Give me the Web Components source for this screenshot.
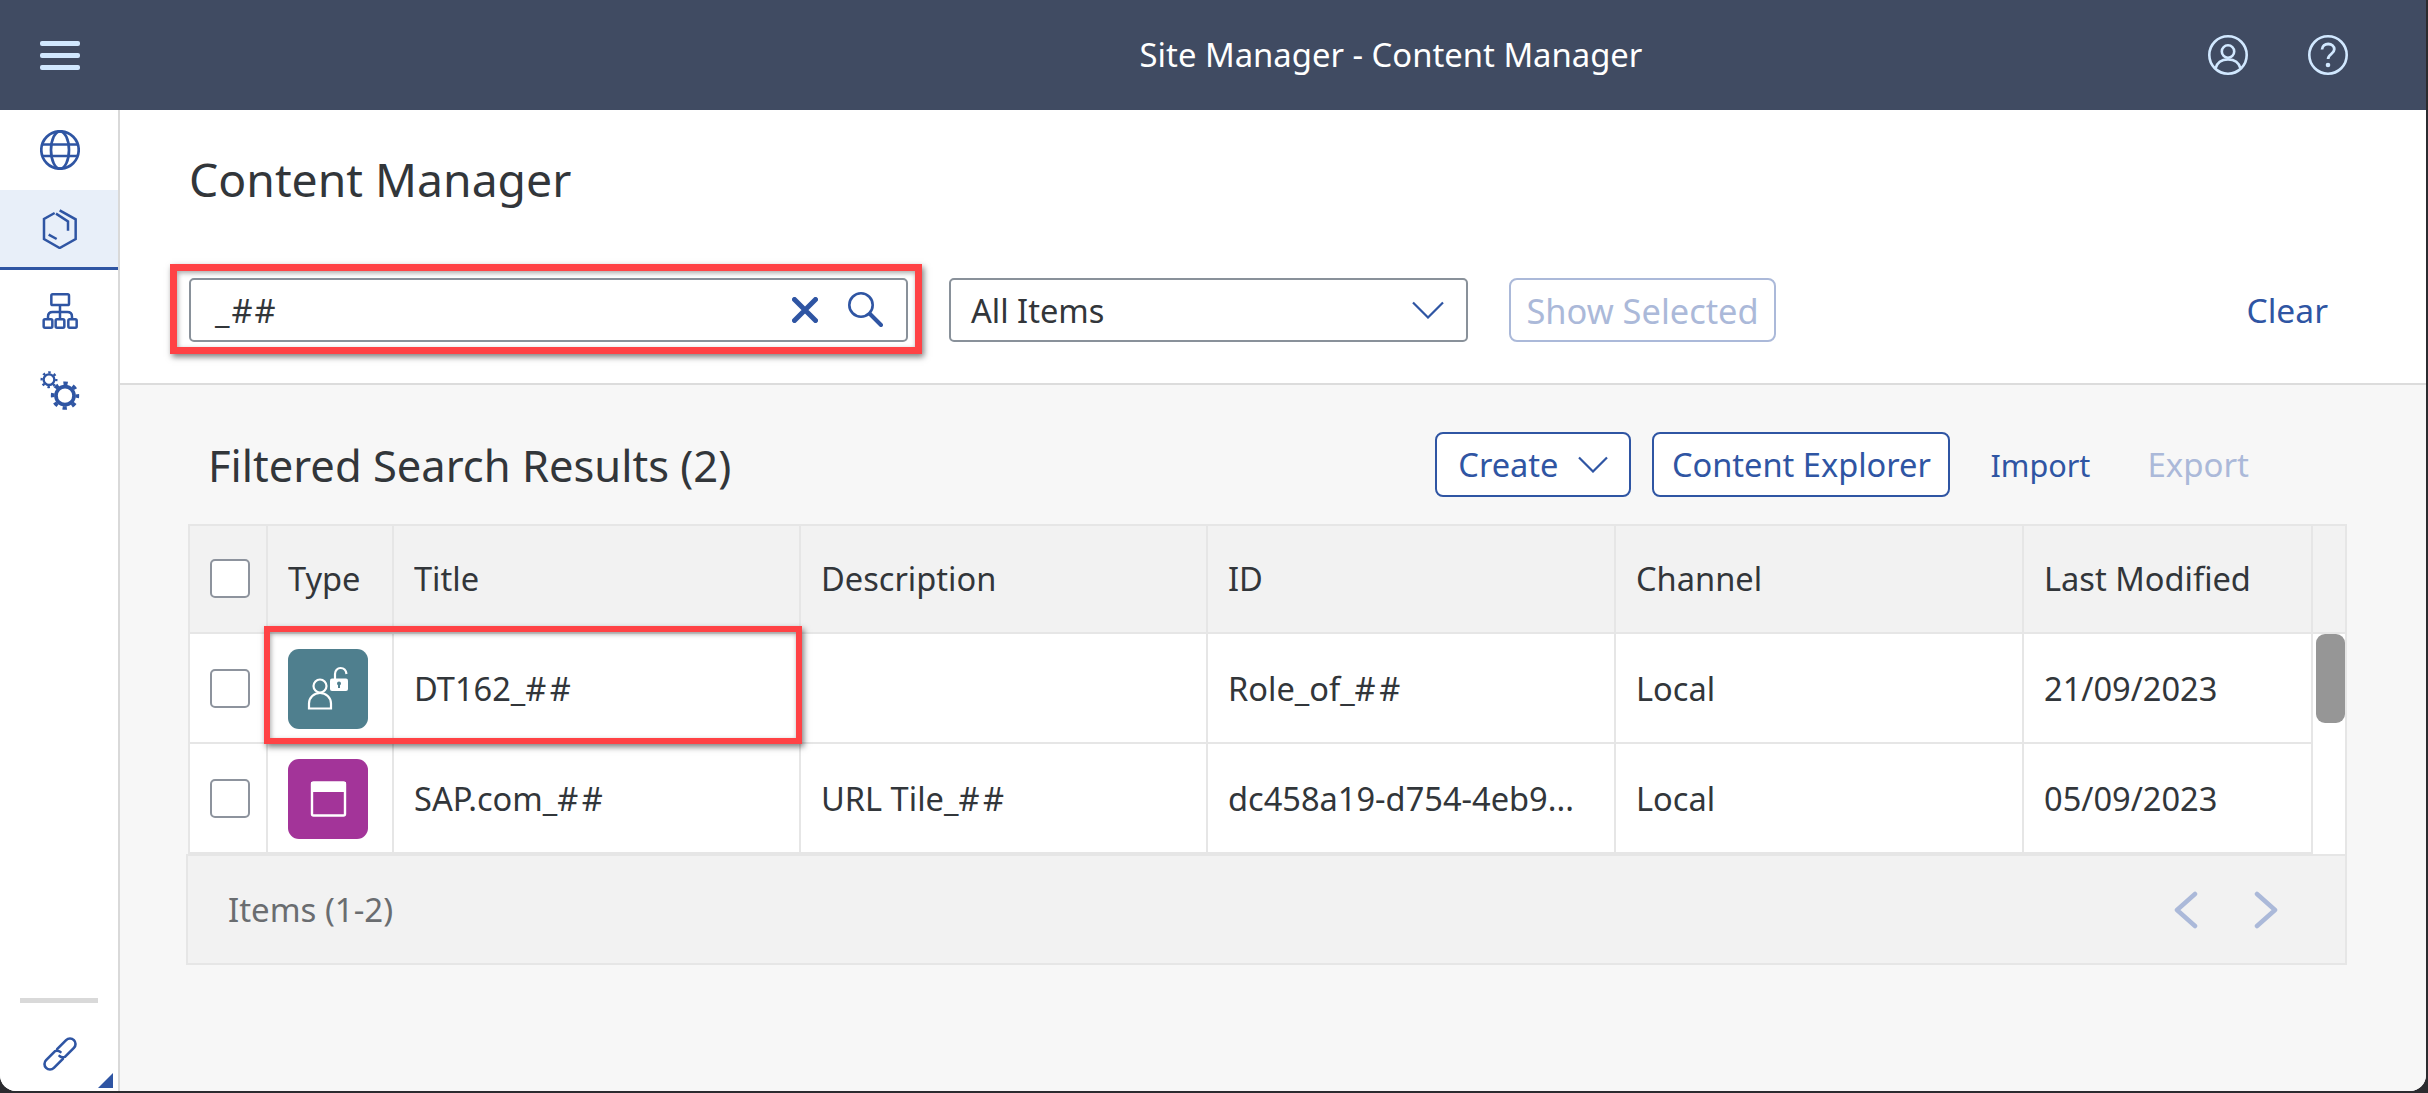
<!DOCTYPE html>
<html lang="en"><head><meta charset="utf-8"><title>Content Manager</title>
<style>
html,body{margin:0;height:100%;background:#2b2b2f;overflow:hidden}
body{font-family:"Noto Sans","Open Sans","Liberation Sans",sans-serif;color:#32363a}
</style></head><body>
<app-shell>
  <shell-bar title-text="Site Manager - Content Manager"></shell-bar>
  <div style="display:flex;flex:1;min-height:0">
    <side-nav></side-nav>
    <div style="flex:1;display:flex;flex-direction:column;min-width:0">
      <page-head></page-head>
      <results-panel></results-panel>
    </div>
  </div>
</app-shell>
<script>
const BLUE='#2f55a3',DIS='#abb9d9',PALE='#d1e8ff';
const HS='<span style="letter-spacing:3.5px">##</span>';
function def(name,html,init){
  customElements.define(name,class extends HTMLElement{
    connectedCallback(){
      if(this.shadowRoot)return;
      const r=this.attachShadow({mode:'open'});
      r.innerHTML=typeof html==='function'?html(this):html;
      if(init)init(this,r);
    }
  });
}
def('app-shell',`<style>:host{display:flex;flex-direction:column;width:2426px;height:1091px;background:#f7f7f7;border-radius:0 0 16px 16px;overflow:hidden}</style><slot></slot>`);

def('shell-bar',h=>`<style>
:host{display:flex;align-items:center;height:110px;flex:none;background:#404b62;color:#fff;position:relative;box-sizing:border-box}
.t{flex:1;text-align:center;font-size:32.8px;padding:0 0 2px 494px;color:#fff}
svg{display:block;flex:none}
.m{margin-left:40px}
.u{margin-right:60px}.h{margin-right:78px}
</style>
<svg class="m" width="40" height="30" viewBox="0 0 40 30"><g fill="${PALE}"><rect y="1" width="40" height="5" rx="2"/><rect y="13" width="40" height="5" rx="2"/><rect y="25" width="40" height="5" rx="2"/></g></svg>
<div class="t">${h.getAttribute('title-text')}</div>
<svg class="u" width="40" height="42" viewBox="0 0 40 42" fill="none" stroke="${PALE}" stroke-width="2.6"><circle cx="20" cy="21" r="18.7"/><circle cx="20" cy="17.5" r="6.2"/><path d="M7.5 34.500c1.500-6 6-9 12.500-9s11 3 12.500 9"/></svg>
<svg class="h" width="40" height="42" viewBox="0 0 40 42" fill="none" stroke="${PALE}" stroke-width="2.6"><circle cx="20" cy="21" r="18.700"/><path d="M14 15.500c.3-3.500 3-5.500 6.200-5.500 3.500 0 6.100 2.200 6.100 5.300 0 4.700-6.200 4.700-6.200 9.700" stroke-width="2.800"/><circle cx="20" cy="31" r="2.300" fill="${PALE}" stroke="none"/></svg>`);

def('nav-item',h=>`<style>
:host{display:flex;align-items:center;justify-content:center;width:118px;box-sizing:border-box;height:var(--h,80px);padding-left:2px}
:host([active]){background:#e8eff9;border-bottom:3px solid ${BLUE};}
</style><slot></slot>`);

def('side-nav',`<style>
:host{display:flex;flex-direction:column;width:120px;flex:none;background:#fff;border-right:2px solid #d9d9d9;box-sizing:border-box;position:relative}
svg{display:block;fill:none;stroke:${BLUE}}
.sp{flex:1}
.dv{height:5px;width:78px;background:#d9d9d9;margin:0 0 0 20px}
.tri{position:absolute;left:98px;top:963px;width:15px;height:15px;background:${BLUE};clip-path:polygon(100% 0,100% 100%,0 100%)}
</style>
<nav-item><svg width="40" height="40" viewBox="0 0 40 40" stroke-width="2.700"><circle cx="20" cy="20" r="18.700"/><ellipse cx="20" cy="20" rx="9" ry="18.700"/><path d="M2.500 14.500h35M2.500 26h35"/></svg></nav-item>
<nav-item active><svg width="40" height="40" viewBox="60 269 120 120" stroke-width="7.500"><path d="M104 281 72 299v60l47 27 48-27v-59l-48-27"/><path d="M108 283l36 23v28M86 346l24 13"/></svg></nav-item>
<nav-item><svg style="margin-top:4px" width="40" height="40" viewBox="60 20 120 120" stroke-width="7.500"><rect x="94" y="27" width="53" height="32" rx="4"/><path d="M120 59v43M84 102v-8q0-14 14-14h44q14 0 14 14v8"/><rect x="71" y="102" width="26" height="25" rx="4"/><rect x="107" y="102" width="26" height="25" rx="4"/><rect x="145" y="102" width="25" height="25" rx="4"/></svg></nav-item>
<nav-item><svg width="40" height="40" viewBox="60 255 120 120"><circle cx="135" cy="332" r="27" stroke-width="11"/><circle cx="135" cy="332" r="37" stroke-width="11" stroke-dasharray="13 16.060" stroke-dashoffset="6"/><circle cx="87" cy="284" r="16" stroke-width="7"/><circle cx="87" cy="284" r="22" stroke-width="7" stroke-dasharray="7.500 9.780" stroke-dashoffset="3"/></svg></nav-item>
<div class="sp"></div>
<div class="dv"></div>
<nav-item style="--h:88px"><svg style="margin-top:14px" width="36" height="36" viewBox="0 0 36 36" stroke-width="2.600" stroke-linecap="round"><path d="M15.100 13.100 24.100 4.100A5.500 5.500 0 0 1 31.900 11.900L22.900 20.900A5.500 5.500 0 0 1 17.500 20"/><path d="M20.900 22.900 11.900 31.900A5.500 5.500 0 0 1 4.100 24.100L13.100 15.100A5.500 5.500 0 0 1 18.500 16"/></svg></nav-item>
<div class="tri"></div>`);

def('red-mark',`<style>:host{position:absolute;display:block;box-sizing:border-box;border:7px solid #ff4245;box-shadow:2px 3px 6px rgba(0,0,0,.5),inset 1px 2px 5px rgba(0,0,0,.35);pointer-events:none;z-index:5}</style>`);

def('field-box',`<style>:host{display:flex;align-items:center;box-sizing:border-box;height:64px;border:2px solid #89919a;border-radius:5px;background:#fff;font-size:32.600px;color:#32363a;position:relative}</style><slot></slot>`);

def('ui-button',h=>{const d=h.hasAttribute('disabled');return `<style>
:host{display:inline-flex;align-items:center;justify-content:center;box-sizing:border-box;height:${h.getAttribute('h')||65}px;border:2px solid ${d?DIS:BLUE};border-radius:8px;background:#fff;color:${d?DIS:BLUE};font-size:${h.getAttribute('fs')||32.6}px;white-space:nowrap}
:host([flat]){border:none;background:none;height:auto}
</style><slot></slot>`});

def('page-head',`<style>
:host{display:block;background:#fff;height:275px;flex:none;box-sizing:border-box;border-bottom:2px solid #dcdcdc;padding:0 98px 0 69px}
h1{margin:0;font-weight:400;font-size:46.300px;line-height:66px;padding-top:37px;height:168px;box-sizing:border-box;color:#32363a}
.row{display:flex;align-items:center}
.s{width:719px;position:relative}
.val{flex:1;padding-left:24px;letter-spacing:2px}
svg{display:block;flex:none}
.sel{width:519px;margin-left:41px}
.show{width:267px;margin-left:41px}
.clear{margin-left:auto}
red-mark{left:-19px;top:-14px;width:752px;height:90px}
</style>
<h1>Content Manager</h1>
<div class="row">
  <div class="s"><field-box>
    <span class="val">_##</span>
    <svg width="26" height="26" viewBox="0 0 26 26" fill="none" stroke="${BLUE}" stroke-width="5" stroke-linecap="round" style="margin-right:29px"><path d="M2.500 2.500l21 21M23.500 2.500l-21 21"/></svg>
    <svg width="36" height="36" viewBox="0 0 36 36" fill="none" stroke="${BLUE}" stroke-linecap="round" style="margin-right:23px"><circle cx="14" cy="13" r="11.700" stroke-width="2.600"/><path d="M23 22l11 11" stroke-width="4"/></svg>
  </field-box><red-mark></red-mark></div>
  <field-box class="sel"><span style="padding-left:20px;flex:1">All Items</span><svg width="32" height="18" viewBox="0 0 32 18" fill="none" stroke="${BLUE}" stroke-width="2.200" style="margin-right:22px"><path d="M1 1.500l15 15 15-15"/></svg></field-box>
  <ui-button class="show" disabled h="64" fs="34.400">Show Selected</ui-button>
  <ui-button class="clear" flat fs="33.600">Clear</ui-button>
</div>`);

def('check-box',`<style>:host{display:block;width:40px;height:39px;box-sizing:border-box;border:2px solid #8d939d;border-radius:5px;background:#fff}</style>`);

def('type-tile',h=>`<style>:host{display:flex;align-items:center;justify-content:center;width:80px;height:80px;border-radius:11px;margin-top:1px;background:${h.getAttribute('bg')}}svg{display:block}</style><slot></slot>`);

def('data-row',h=>`<style>
:host{display:grid;grid-template-columns:78px 126px 407px 407px 408px 408px 289px;box-sizing:border-box;height:${h.getAttribute('h')||110}px;background:${h.hasAttribute('head')?'#f2f2f2':'#fff'};border-bottom:2px solid #e6e6e6}
</style><slot></slot>`);
def('data-cell',h=>`<style>
:host{display:flex;align-items:center;min-width:0;box-sizing:border-box;padding-left:20px;padding-bottom:${h.hasAttribute('hd')?'2px':'0'};border-right:2px solid #e6e6e6;font-size:32.6px;white-space:nowrap;color:#32363a}
span{overflow:hidden;text-overflow:ellipsis;padding-right:10px}
</style><span><slot></slot></span>`);

const teal=`<svg width="80" height="80" viewBox="0 0 80 80"><g fill="none" stroke="#fff" stroke-width="2.200"><circle cx="32" cy="37" r="6.500"/><path d="M21 59.500v-5c0-6 5-10.500 11-10.500s11 4.500 11 10.500v5z"/><path d="M47 30v-5c0-3.500 2.500-6 5.500-6s5.500 2 6 6"/></g><rect x="42" y="29.500" width="18" height="12.500" rx="2" fill="#fff"/><circle cx="51" cy="34.500" r="2" fill="#4f7f8e"/><rect x="50" y="35" width="2" height="4" fill="#4f7f8e"/></svg>`;
const win=`<svg width="80" height="80" viewBox="0 0 80 80"><rect x="24" y="23.500" width="33" height="33" rx="1.500" fill="none" stroke="#fff" stroke-width="2.400"/><rect x="23" y="23" width="35" height="10" fill="#fff"/></svg>`;

def('results-panel',`<style>
:host{display:block;flex:1;background:#f7f7f7;padding:47px 79px 0 68px;min-height:0}
.bar{display:flex;align-items:center;height:65px;padding-left:20px;padding-right:98px;margin-bottom:27px}
h2{margin:0;font-weight:400;font-size:43.500px;color:#32363a;flex:1}
.create{width:196px}.ce{width:298px;margin-left:21px}
.imp{margin-left:40px}.exp{margin-left:57px}
.tw{position:relative;display:flex;box-sizing:border-box;border:2px solid #e6e6e6;border-bottom:none;background:#fff}
.tb{flex:1;min-width:0}
.sb{width:32px;flex:none;box-sizing:border-box;position:relative;background:#fff}
.sh{height:108px;background:#f2f2f2;border-bottom:2px solid #e6e6e6;box-sizing:border-box}
.th{width:29px;height:89px;background:#969696;border-radius:9px;margin:0 0 0 3px}
.ft{display:flex;align-items:center;box-sizing:border-box;height:111px;margin-left:-2px;border:2px solid #e6e6e6;background:#f2f2f2;font-size:33px;color:#6a6d70;padding-left:40px}
.ft svg{display:block}
red-mark{left:74px;top:100px;width:538px;height:118px;border-width:6px}
</style>
<div class="bar"><h2>Filtered Search Results (2)</h2>
<ui-button class="create">Create<svg width="32" height="17" viewBox="0 0 32 17" fill="none" stroke="${BLUE}" stroke-width="2.200" style="margin-left:18px"><path d="M2 1.500l14 14 14-14"/></svg></ui-button>
<ui-button class="ce">Content Explorer</ui-button>
<ui-button class="imp" flat fs="30.600">Import</ui-button>
<ui-button class="exp" flat disabled fs="33">Export</ui-button></div>
<div class="tw">
 <div class="tb">
  <data-row head h="108"><data-cell hd><check-box></check-box></data-cell><data-cell hd>Type</data-cell><data-cell hd>Title</data-cell><data-cell hd>Description</data-cell><data-cell hd>ID</data-cell><data-cell hd>Channel</data-cell><data-cell hd>Last Modified</data-cell></data-row>
  <data-row h="110"><data-cell><check-box></check-box></data-cell><data-cell><type-tile bg="#4f7f8e">${teal}</type-tile></data-cell><data-cell>DT162_${HS}</data-cell><data-cell></data-cell><data-cell>Role_of_${HS}</data-cell><data-cell>Local</data-cell><data-cell>21/09/2023</data-cell></data-row>
  <data-row h="110"><data-cell><check-box></check-box></data-cell><data-cell><type-tile bg="#a33499">${win}</type-tile></data-cell><data-cell>SAP.com_${HS}</data-cell><data-cell>URL Tile_${HS}</data-cell><data-cell>dc458a19-d754-4eb9...</data-cell><data-cell>Local</data-cell><data-cell>05/09/2023</data-cell></data-row>
 </div>
 <div class="sb"><div class="sh"></div><div class="th"></div></div>
 <red-mark></red-mark>
</div>
<div class="ft"><span style="flex:1">Items (1-2)</span>
 <svg width="24" height="38" viewBox="0 0 24 38" fill="none" stroke="${DIS}" stroke-width="4.500" stroke-linecap="round" stroke-linejoin="round" style="margin-right:56px"><path d="M21 3 3 19l18 16"/></svg>
 <svg width="24" height="38" viewBox="0 0 24 38" fill="none" stroke="${DIS}" stroke-width="4.500" stroke-linecap="round" stroke-linejoin="round" style="margin-right:67px"><path d="M3 3l18 16L3 35"/></svg>
</div>`);
</script>
</body></html>
